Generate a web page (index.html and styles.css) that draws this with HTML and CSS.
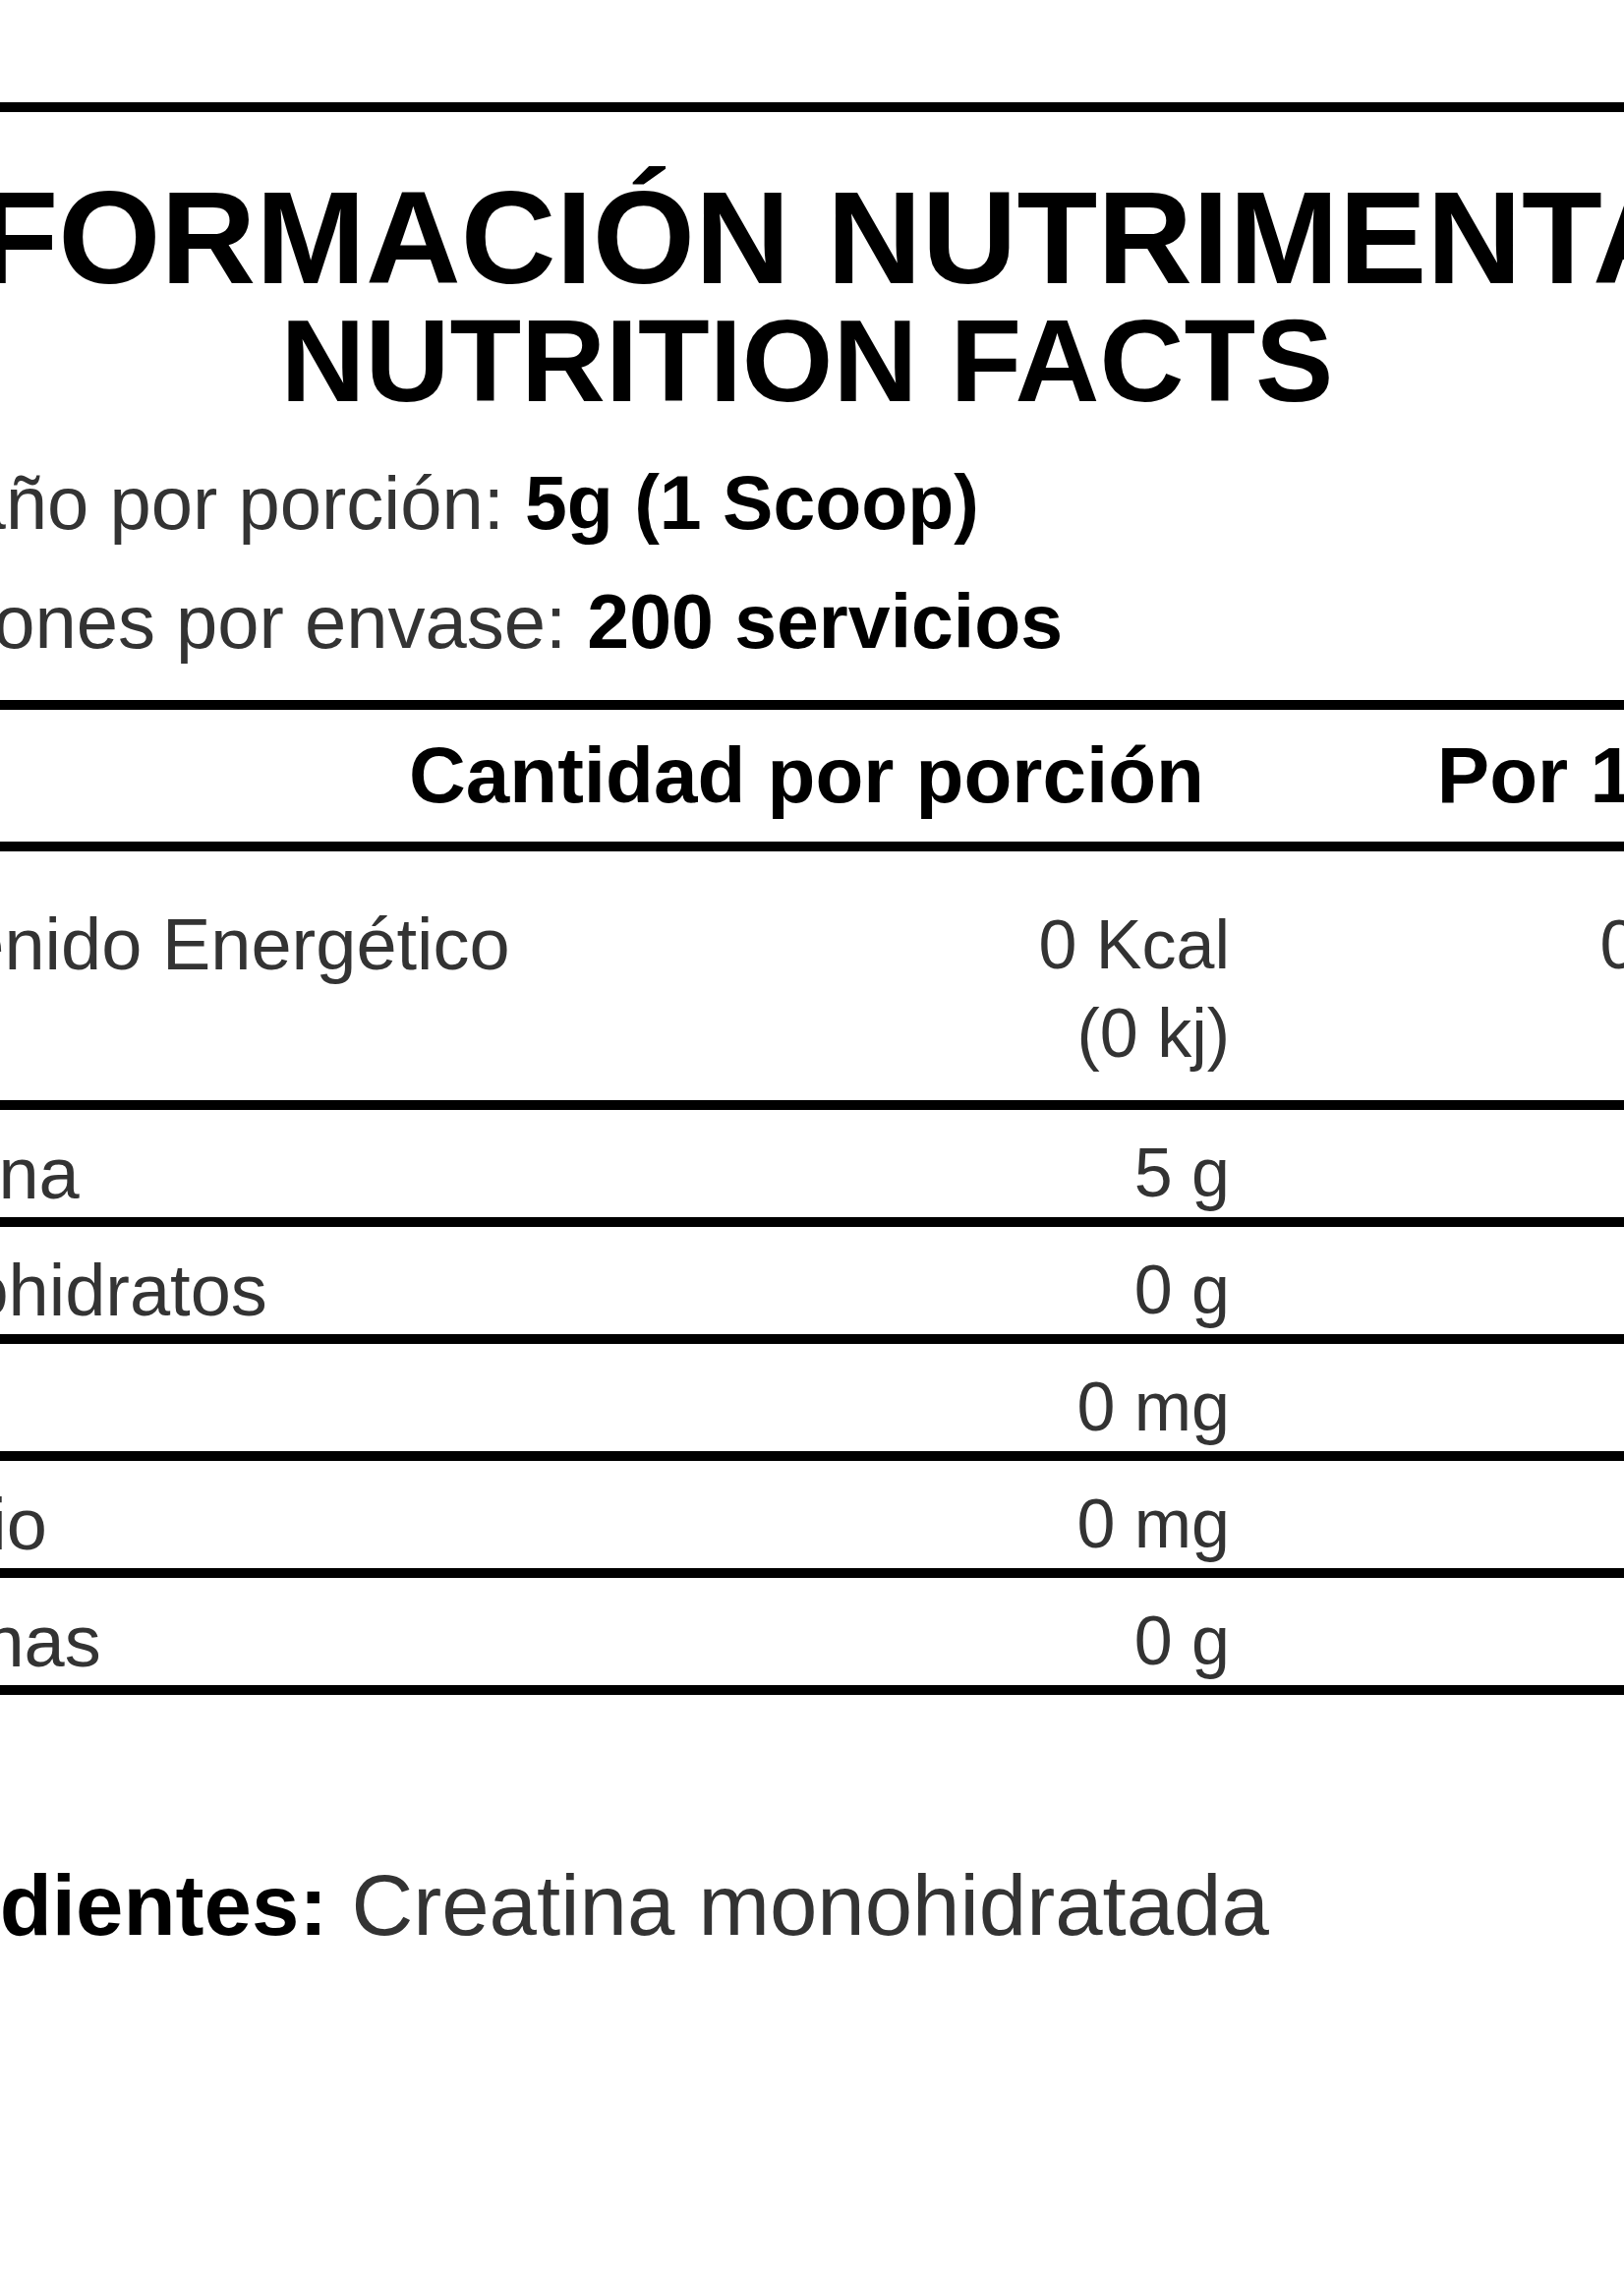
FILE: index.html
```html
<!DOCTYPE html>
<html lang="es">
<head>
<meta charset="utf-8">
<title>Información Nutrimental</title>
<link rel="stylesheet" href="styles.css">
</head>
<body>
<main class="page">
  <section class="label">
    <header class="label__title">
      <h1 class="title title--es">INFORMACIÓN NUTRIMENTAL</h1>
      <h2 class="title title--en">NUTRITION FACTS</h2>
    </header>
    <div class="serving">
      <p class="serving__line">Tamaño por porción: <strong class="serving__val">5g (1 Scoop)</strong></p>
      <p class="serving__line">Porciones por envase: <strong class="serving__val">200 servicios</strong></p>
    </div>
    <div class="facts">
      <div class="facts__row facts__row--head">
        <span class="facts__head"></span>
        <span class="facts__head facts__head--mid">Cantidad por porción</span>
        <span class="facts__head facts__head--end">Por 100 g</span>
      </div>
      <div class="facts__row facts__row--energy">
        <span class="facts__name">Contenido Energético</span>
        <span class="facts__val">0 Kcal<br>(0 kj)</span>
        <span class="facts__val">0 Kcal<br>(0 kj)</span>
      </div>
      <div class="facts__row">
        <span class="facts__name facts__name--wide">Creatina</span>
        <span class="facts__val">5 g</span>
        <span class="facts__val">100 g</span>
      </div>
      <div class="facts__row">
        <span class="facts__name">Carbohidratos</span>
        <span class="facts__val">0 g</span>
        <span class="facts__val">0 g</span>
      </div>
      <div class="facts__row">
        <span class="facts__name">Sodio</span>
        <span class="facts__val">0 mg</span>
        <span class="facts__val">0 mg</span>
      </div>
      <div class="facts__row">
        <span class="facts__name facts__name--wide">Potasio</span>
        <span class="facts__val">0 mg</span>
        <span class="facts__val">0 mg</span>
      </div>
      <div class="facts__row">
        <span class="facts__name facts__name--wider">Proteínas</span>
        <span class="facts__val">0 g</span>
        <span class="facts__val">0 g</span>
      </div>
    </div>
  </section>
  <p class="ingredients"><strong class="ingredients__key">Ingredientes:</strong> Creatina monohidratada</p>
</main>
</body>
</html>
```

FILE: styles.css
```css
html,
body {
  margin: 0;
  padding: 0;
  overflow: hidden;
  background: #ffffff;
}

body {
  font-family: "Liberation Sans", Arial, Helvetica, sans-serif;
  color: #333333;
}

.page {
  padding-top: 104px;
}

.label {
  width: 2002px;
  margin-left: -180px;
  border-top: 10px solid #000;
}

.label__title {
  margin-top: 61px;
  text-align: center;
  color: #000;
}

.title {
  margin: 0;
  font-weight: 700;
  white-space: nowrap;
}

.title--es {
  font-size: 134px;
  line-height: 134px;
}

.title--en {
  font-size: 119px;
  line-height: 116px;
}

.serving {
  margin: 26px 0 19px;
}

.serving__line {
  margin: 0;
  font-size: 76px;
  line-height: 120px;
  white-space: nowrap;
}

.serving__val {
  font-size: 77px;
  font-weight: 700;
  color: #000;
}

.facts__row {
  display: grid;
  grid-template-columns: 570px 861px 571px;
  border-top: 10px solid #000;
  padding-top: 20px;
  line-height: 89px;
}

.facts__row:last-child {
  border-bottom: 10px solid #000;
}

.facts__row--head {
  padding-top: 0;
  line-height: 134px;
  font-size: 80px;
  font-weight: 700;
  color: #000;
}

.facts__head {
  white-space: nowrap;
}

.facts__head--mid {
  text-align: center;
}

.facts__head--end {
  text-align: right;
}

.facts__row--energy {
  padding: 50px 0 23px;
  line-height: 90px;
}

.facts__name {
  margin-left: -13px;
  font-size: 74px;
  white-space: nowrap;
}

.facts__name--wide {
  margin-left: -19px;
}

.facts__name--wider {
  margin-left: -34px;
}

.facts__val {
  font-size: 70px;
  text-align: right;
  white-space: nowrap;
}

.ingredients {
  margin: 164px 0 0 -213px;
  font-size: 87px;
  line-height: 100px;
  white-space: nowrap;
}

.ingredients__key {
  font-weight: 700;
  color: #000;
}
```
